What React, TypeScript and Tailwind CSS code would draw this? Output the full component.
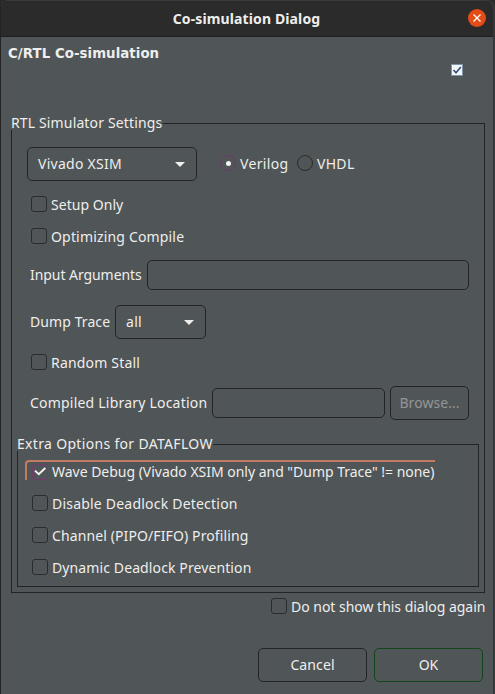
import type { ReactNode } from "react";

function Check({ label, checked = false, className = "" }: { label: string; checked?: boolean; className?: string }) {
  return (
    <label className="flex h-4 items-center gap-1 whitespace-nowrap">
      <span
        className={`flex size-4 shrink-0 items-center justify-center rounded-[3px] border ${
          checked ? "border-[#713b6a]" : "border-[#292b2c]"
        }`}
      >
        {checked && (
          <svg className="size-[14px] shrink-0" viewBox="0 0 14 14" fill="none" stroke="#f4f4f2" strokeWidth="1.9">
            <path d="M2 5.6 L5.8 9.2 L12.3 3" />
          </svg>
        )}
      </span>
      <span className={className}>{label}</span>
    </label>
  );
}

function Combo({ label, className }: { label: string; className: string }) {
  return (
    <div className={`flex h-[34px] items-center justify-between rounded-[5px] border border-[#222425] pr-[11px] pl-2.5 ${className}`}>
      <span>{label}</span>
      <svg className="h-[5px] w-2.5" viewBox="0 0 10 5" fill="#eeeeec">
        <path d="M0 0H10L5 5Z" />
      </svg>
    </div>
  );
}

function Group({ title, titleClass, children, className }: { title: string; titleClass: string; children: ReactNode; className: string }) {
  return (
    <section className="flex flex-col">
      <div className="flex h-[14px] items-end">
        <h2 className={`flex h-[14px] items-center whitespace-nowrap ${titleClass}`}>{title}</h2>
        <div className="h-[7px] flex-1 border-t border-r border-[#222425]" />
      </div>
      <div className={`border-x border-b border-[#222425] ${className}`}>{children}</div>
    </section>
  );
}

export default function App() {
  return (
    <div className="h-[694px] w-[495px] bg-[#292929] font-['Noto_Sans',sans-serif] text-[14px] leading-[20px] text-[#eeeeec]">
      <div className="flex h-full flex-col overflow-hidden rounded-t-lg border-r-2 border-l border-r-[#353738] border-l-[#232323] bg-[#505557]">
        <header className="relative flex h-[37px] shrink-0 items-center justify-center border-t border-b border-t-[#3a3a3a] border-b-[#202020] bg-[#2b2b2b] font-bold">
          <h1 className="-ml-px tracking-[0.12px] whitespace-nowrap">Co-simulation Dialog</h1>
          <button className="absolute top-[8px] right-[7px] flex size-[18px] items-center justify-center rounded-full bg-[#e34b17]">
            <svg className="size-2" viewBox="0 0 8 8" stroke="#fff" strokeWidth="1.3">
              <path d="M0.5 0.5L7.5 7.5M7.5 0.5L0.5 7.5" />
            </svg>
          </button>
        </header>

        <div className="flex h-[79px] shrink-0 justify-between pr-[30px] pl-[7px]">
          <h2 className="mt-[7px] font-['DejaVu_Sans',sans-serif] text-[13.33px] font-bold tracking-[0.06px] whitespace-nowrap">C/RTL Co-simulation</h2>
          <span className="mt-[27px] size-3 border border-[#8292a7] bg-[#f4f8fc]">
            <svg className="size-2.5" viewBox="0 0 10 10" fill="none" stroke="#3c5278" strokeWidth="1.7">
              <path d="M1.5 5L4 7.8L8.8 2" />
            </svg>
          </span>
        </div>

        <div className="w-[484px] pl-2.5">
          <Group title="RTL Simulator Settings" titleClass="w-[152px] tracking-[0.14px]" className="h-[463px] pr-[5px] pl-[5px]">
            <div className="mt-[17px] ml-[10px] flex items-center">
              <Combo label="Vivado XSIM" className="w-[170px] tracking-[0.27px]" />
              <div className="ml-[23px] flex items-center whitespace-nowrap">
                <span className="relative -top-px flex size-4 items-center justify-center rounded-full border border-[#713b6a]">
                  <span className="size-[5px] rounded-full bg-[#f4f4f2]" />
                </span>
                <span className="ml-1 w-[49px] tracking-[0.35px]">Verilog</span>
                <span className="relative -top-px ml-2 size-4 rounded-full border border-[#292b2c]" />
                <span className="ml-1 tracking-[0.3px]">VHDL</span>
              </div>
            </div>
            <div className="mt-[15px] ml-[14px] flex flex-col gap-4">
              <Check label="Setup Only" className="relative top-px tracking-[0.04px]" />
              <Check label="Optimizing Compile" className="relative top-px tracking-[0.17px]" />
            </div>
            <div className="mt-4 ml-[13px] flex h-[30px] items-center whitespace-nowrap">
              <span className="w-[117px] tracking-[-0.06px]">Input Arguments</span>
              <div className="h-[30px] w-[322px] rounded-[5px] border border-[#222425]" />
            </div>
            <div className="mt-[15px] ml-[13px] flex items-center whitespace-nowrap">
              <span className="w-[85px] tracking-[0.09px]">Dump Trace</span>
              <Combo label="all" className="w-[91px] tracking-[0.3px]" />
            </div>
            <div className="mt-[15px] ml-[14px]">
              <Check label="Random Stall" className="relative top-px tracking-[0.18px]" />
            </div>
            <div className="mt-4 ml-[13px] flex h-[34px] items-center whitespace-nowrap">
              <span className="w-[182px] tracking-[0.21px]">Compiled Library Location</span>
              <div className="h-[30px] w-[173px] rounded-[5px] border border-[#222425]" />
              <button className="ml-[5px] h-[34px] w-[79px] rounded-[5px] border border-[#222425] tracking-[0.05px] text-[#949696]">Browse...</button>
            </div>
            <div className="mt-[17px]">
              <Group title="Extra Options for DATAFLOW" titleClass="w-[196px] tracking-[0.32px]" className="h-[136px] pl-[7px]">
                <div className="mt-[9px] h-5 w-[410px] rounded-tl-[4px] border-t-2 border-l-2 border-[#c37b61] pt-[2px] pl-[5px]">
                  <Check checked label={'Wave Debug (Vivado XSIM only and "Dump Trace" != none)'} className="tracking-[-0.02px]" />
                </div>
                <div className="mt-[15px] ml-[7px] flex flex-col gap-4">
                  <Check label="Disable Deadlock Detection" className="relative top-px tracking-[0.21px]" />
                  <Check label="Channel (PIPO/FIFO) Profiling" className="relative top-px tracking-[0.11px]" />
                  <Check label="Dynamic Deadlock Prevention" className="relative top-px tracking-[0.11px]" />
                </div>
              </Group>
            </div>
          </Group>
        </div>

        <div className="mt-[5px] ml-[270px]">
          <Check label="Do not show this dialog again" className="relative top-px tracking-[-0.02px]" />
        </div>
        <footer className="mt-[34px] ml-[257px] flex gap-[7px]">
          <button className="h-[34px] w-[109px] rounded-[5px] border border-[#222425] tracking-[0.1px]">Cancel</button>
          <button className="h-[34px] w-[109px] rounded-[5px] border border-[#12461a]">OK</button>
        </footer>
      </div>
    </div>
  );
}
